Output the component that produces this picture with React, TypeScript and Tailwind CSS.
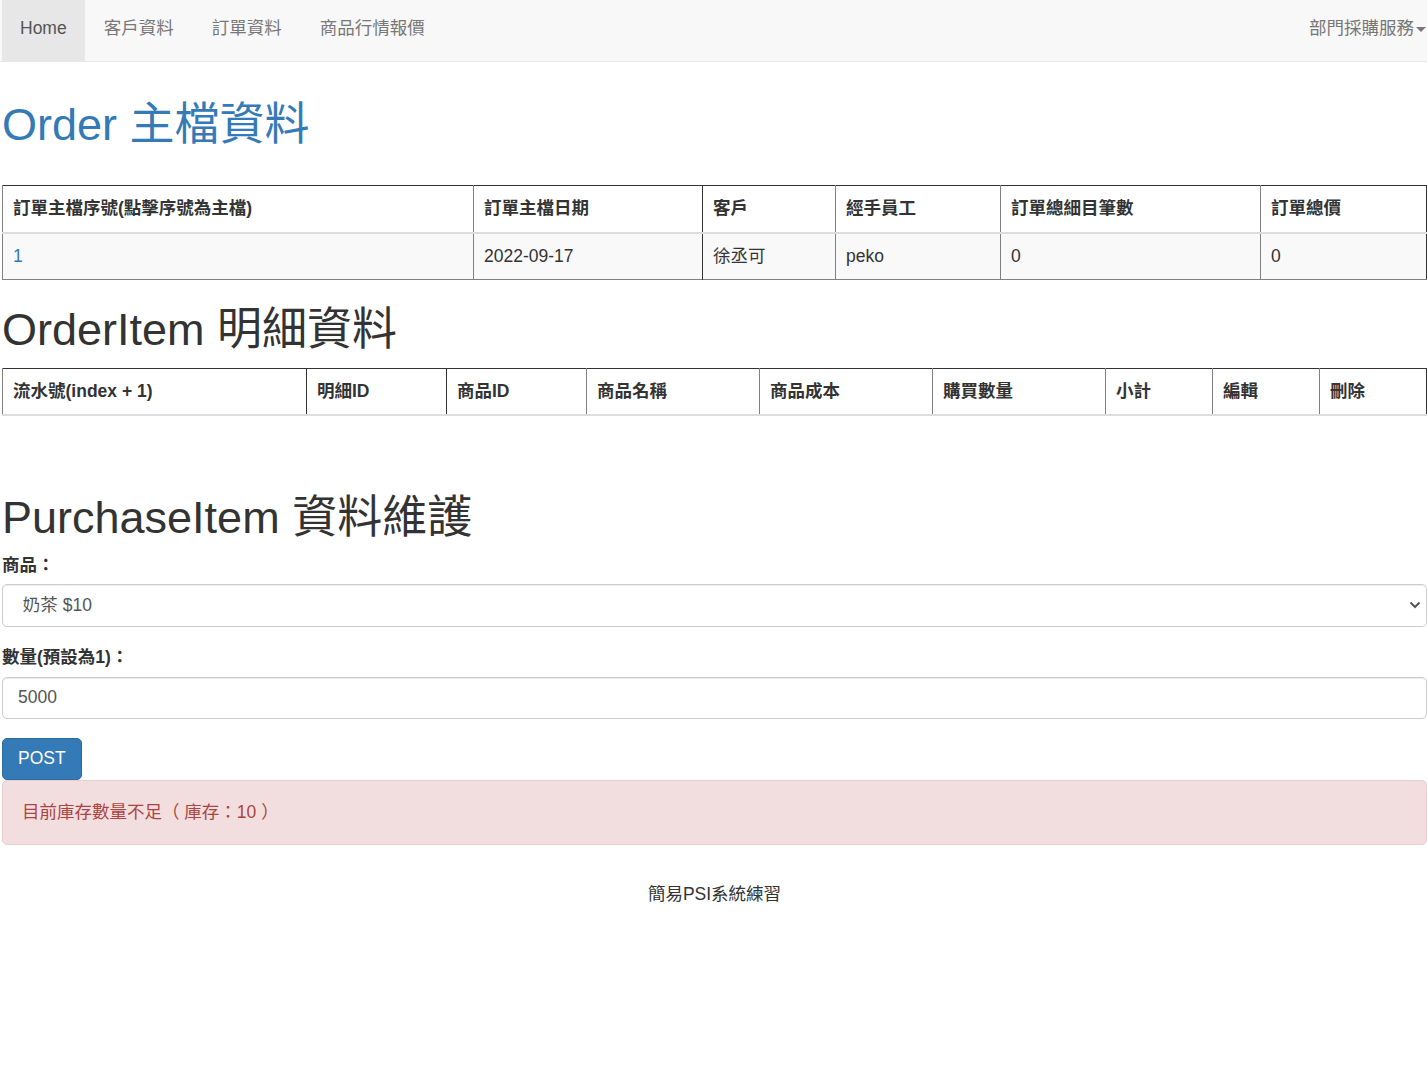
import React from 'react'

const font = { fontFamily: '"Liberation Sans", "Noto Sans CJK TC", sans-serif' }

const orderCols = [
  { label: '訂單主檔序號(點擊序號為主檔)', w: 'w-[471px]', b: 'border-l-[#808080]' },
  { label: '訂單主檔日期', w: 'w-[229px]', b: 'border-l-[#808080]' },
  { label: '客戶', w: 'w-[133px]', b: 'border-l-[#333]' },
  { label: '經手員工', w: 'w-[165px]', b: 'border-l-[#808080]' },
  { label: '訂單總細目筆數', w: 'w-[260px]', b: 'border-l-[#808080]' },
  { label: '訂單總價', w: 'w-[166px]', b: 'border-l-[#808080]' },
]

const orderRow = ['1', '2022-09-17', '徐丞可', 'peko', '0', '0']

const itemCols = [
  { label: '流水號(index + 1)', w: 'w-[304px]', b: 'border-l-[#808080]' },
  { label: '明細ID', w: 'w-[140px]', b: 'border-l-[#333]' },
  { label: '商品ID', w: 'w-[140px]', b: 'border-l-[#333]' },
  { label: '商品名稱', w: 'w-[173px]', b: 'border-l-[#808080]' },
  { label: '商品成本', w: 'w-[173px]', b: 'border-l-[#808080]' },
  { label: '購買數量', w: 'w-[173px]', b: 'border-l-[#808080]' },
  { label: '小計', w: 'w-[107px]', b: 'border-l-[#808080]' },
  { label: '編輯', w: 'w-[107px]', b: 'border-l-[#808080]' },
  { label: '刪除', w: 'w-[107px]', b: 'border-l-[#808080]' },
]

function NavBar() {
  return (
    <div className="flex h-[62px] items-start justify-between border-b border-[#e7e7e7] bg-[#f8f8f8] pl-[2px]">
      <div className="flex">
        <a className="h-[61px] bg-[#e7e7e7] px-[18px] pt-[16px] text-[#555]">Home</a>
        <a className="h-[61px] px-[19px] pt-[16px] text-[#777]">客戶資料</a>
        <a className="h-[61px] px-[19px] pt-[16px] text-[#777]">訂單資料</a>
        <a className="h-[61px] px-[19px] pt-[16px] text-[#777]">商品行情報價</a>
      </div>
      <a className="flex h-[61px] items-start pt-[16px] pr-[1px] text-[#777]">
        部門採購服務
        <span className="mt-[11px] ml-[2px] h-0 w-0 border-t-[5px] border-r-[5px] border-l-[5px] border-t-[#777] border-r-transparent border-l-transparent" />
      </a>
    </div>
  )
}

export default function App() {
  return (
    <div className="min-h-screen bg-white text-[17.5px] leading-[25px] text-[#333]" style={font}>
      <NavBar />

      <div className="pl-[2px]">
        {/* Order 主檔 */}
        <h1 className="mt-[38px] text-[45px] leading-[49.5px] font-normal text-[#337ab7]">Order 主檔資料</h1>
        <table className="mt-[35px] w-[1425px] table-fixed border-collapse border-t border-r border-b border-l border-t-[#333] border-r-[#333] border-b-[#808080] border-l-[#808080]">
          <colgroup>
            {orderCols.map((c) => (
              <col key={c.label} className={c.w} />
            ))}
          </colgroup>
          <thead>
            <tr className="border-b-2 border-[#ddd]">
              {orderCols.map((c) => (
                <th key={c.label} className={`border-l ${c.b} px-[10px] pt-[10px] pb-[11px] text-left font-bold`}>
                  {c.label}
                </th>
              ))}
            </tr>
          </thead>
          <tbody>
            <tr className="bg-[#f9f9f9]">
              {orderRow.map((v, i) => (
                <td key={i} className={`border-l ${orderCols[i].b} px-[10px] pt-[10px] pb-[10px]`}>
                  {i === 0 ? <a className="text-[#337ab7]">{v}</a> : v}
                </td>
              ))}
            </tr>
          </tbody>
        </table>

        {/* OrderItem 明細 */}
        <h1 className="mt-[25px] text-[45px] leading-[49.5px] font-normal">OrderItem 明細資料</h1>
        <table className="mt-[14px] w-[1425px] table-fixed border-collapse border-t border-r border-l border-t-[#333] border-r-[#333] border-l-[#808080]">
          <colgroup>
            {itemCols.map((c) => (
              <col key={c.label} className={c.w} />
            ))}
          </colgroup>
          <thead>
            <tr className="border-b-2 border-[#ddd]">
              {itemCols.map((c) => (
                <th key={c.label} className={`border-l ${c.b} px-[10px] pt-[10px] pb-[10px] text-left font-bold`}>
                  {c.label}
                </th>
              ))}
            </tr>
          </thead>
          <tbody />
        </table>

        {/* PurchaseItem 表單 */}
        <h1 className="mt-[77px] text-[45px] leading-[49.5px] font-normal">PurchaseItem 資料維護</h1>
        <form className="mt-[10px]" onSubmit={(e) => e.preventDefault()}>
          <div className="mb-[18px]">
            <label className="mb-[6px] block font-bold">商品：</label>
            <div className="relative">
              <select
                defaultValue="milk-tea"
                className="block h-[43px] w-full appearance-none rounded-[5px] border border-[#ccc] bg-white px-[15px] text-[#555] shadow-[inset_0_1px_1px_rgba(0,0,0,0.075)]"
                style={font}
              >
                <option value="milk-tea">&nbsp;奶茶 $10</option>
              </select>
              <svg className="pointer-events-none absolute top-1/2 right-[6px] -translate-y-1/2" width="12" height="8" viewBox="0 0 12 8">
                <polyline points="1.5,1.5 6,6 10.5,1.5" fill="none" stroke="#555" strokeWidth="2" />
              </svg>
            </div>
          </div>
          <div className="mb-[19px]">
            <label className="mb-[7px] block font-bold">數量(預設為1)：</label>
            <input
              defaultValue="5000"
              className="block h-[42px] w-full rounded-[5px] border border-[#ccc] bg-white px-[15px] text-[#555] shadow-[inset_0_1px_1px_rgba(0,0,0,0.075)]"
              style={font}
            />
          </div>
          <button
            type="submit"
            className="block rounded-[5px] border border-[#2e6da4] bg-[#337ab7] px-[15px] py-[7.5px] leading-[25px] text-white"
            style={font}
          >
            POST
          </button>
        </form>

        <div className="rounded-[5px] border border-[#ebccd1] bg-[#f2dede] px-[19px] py-[19px] text-[#a94442]">
          目前庫存數量不足（ 庫存：10 ）
        </div>

        <footer className="mt-[37px] text-center">簡易PSI系統練習</footer>
      </div>
    </div>
  )
}
